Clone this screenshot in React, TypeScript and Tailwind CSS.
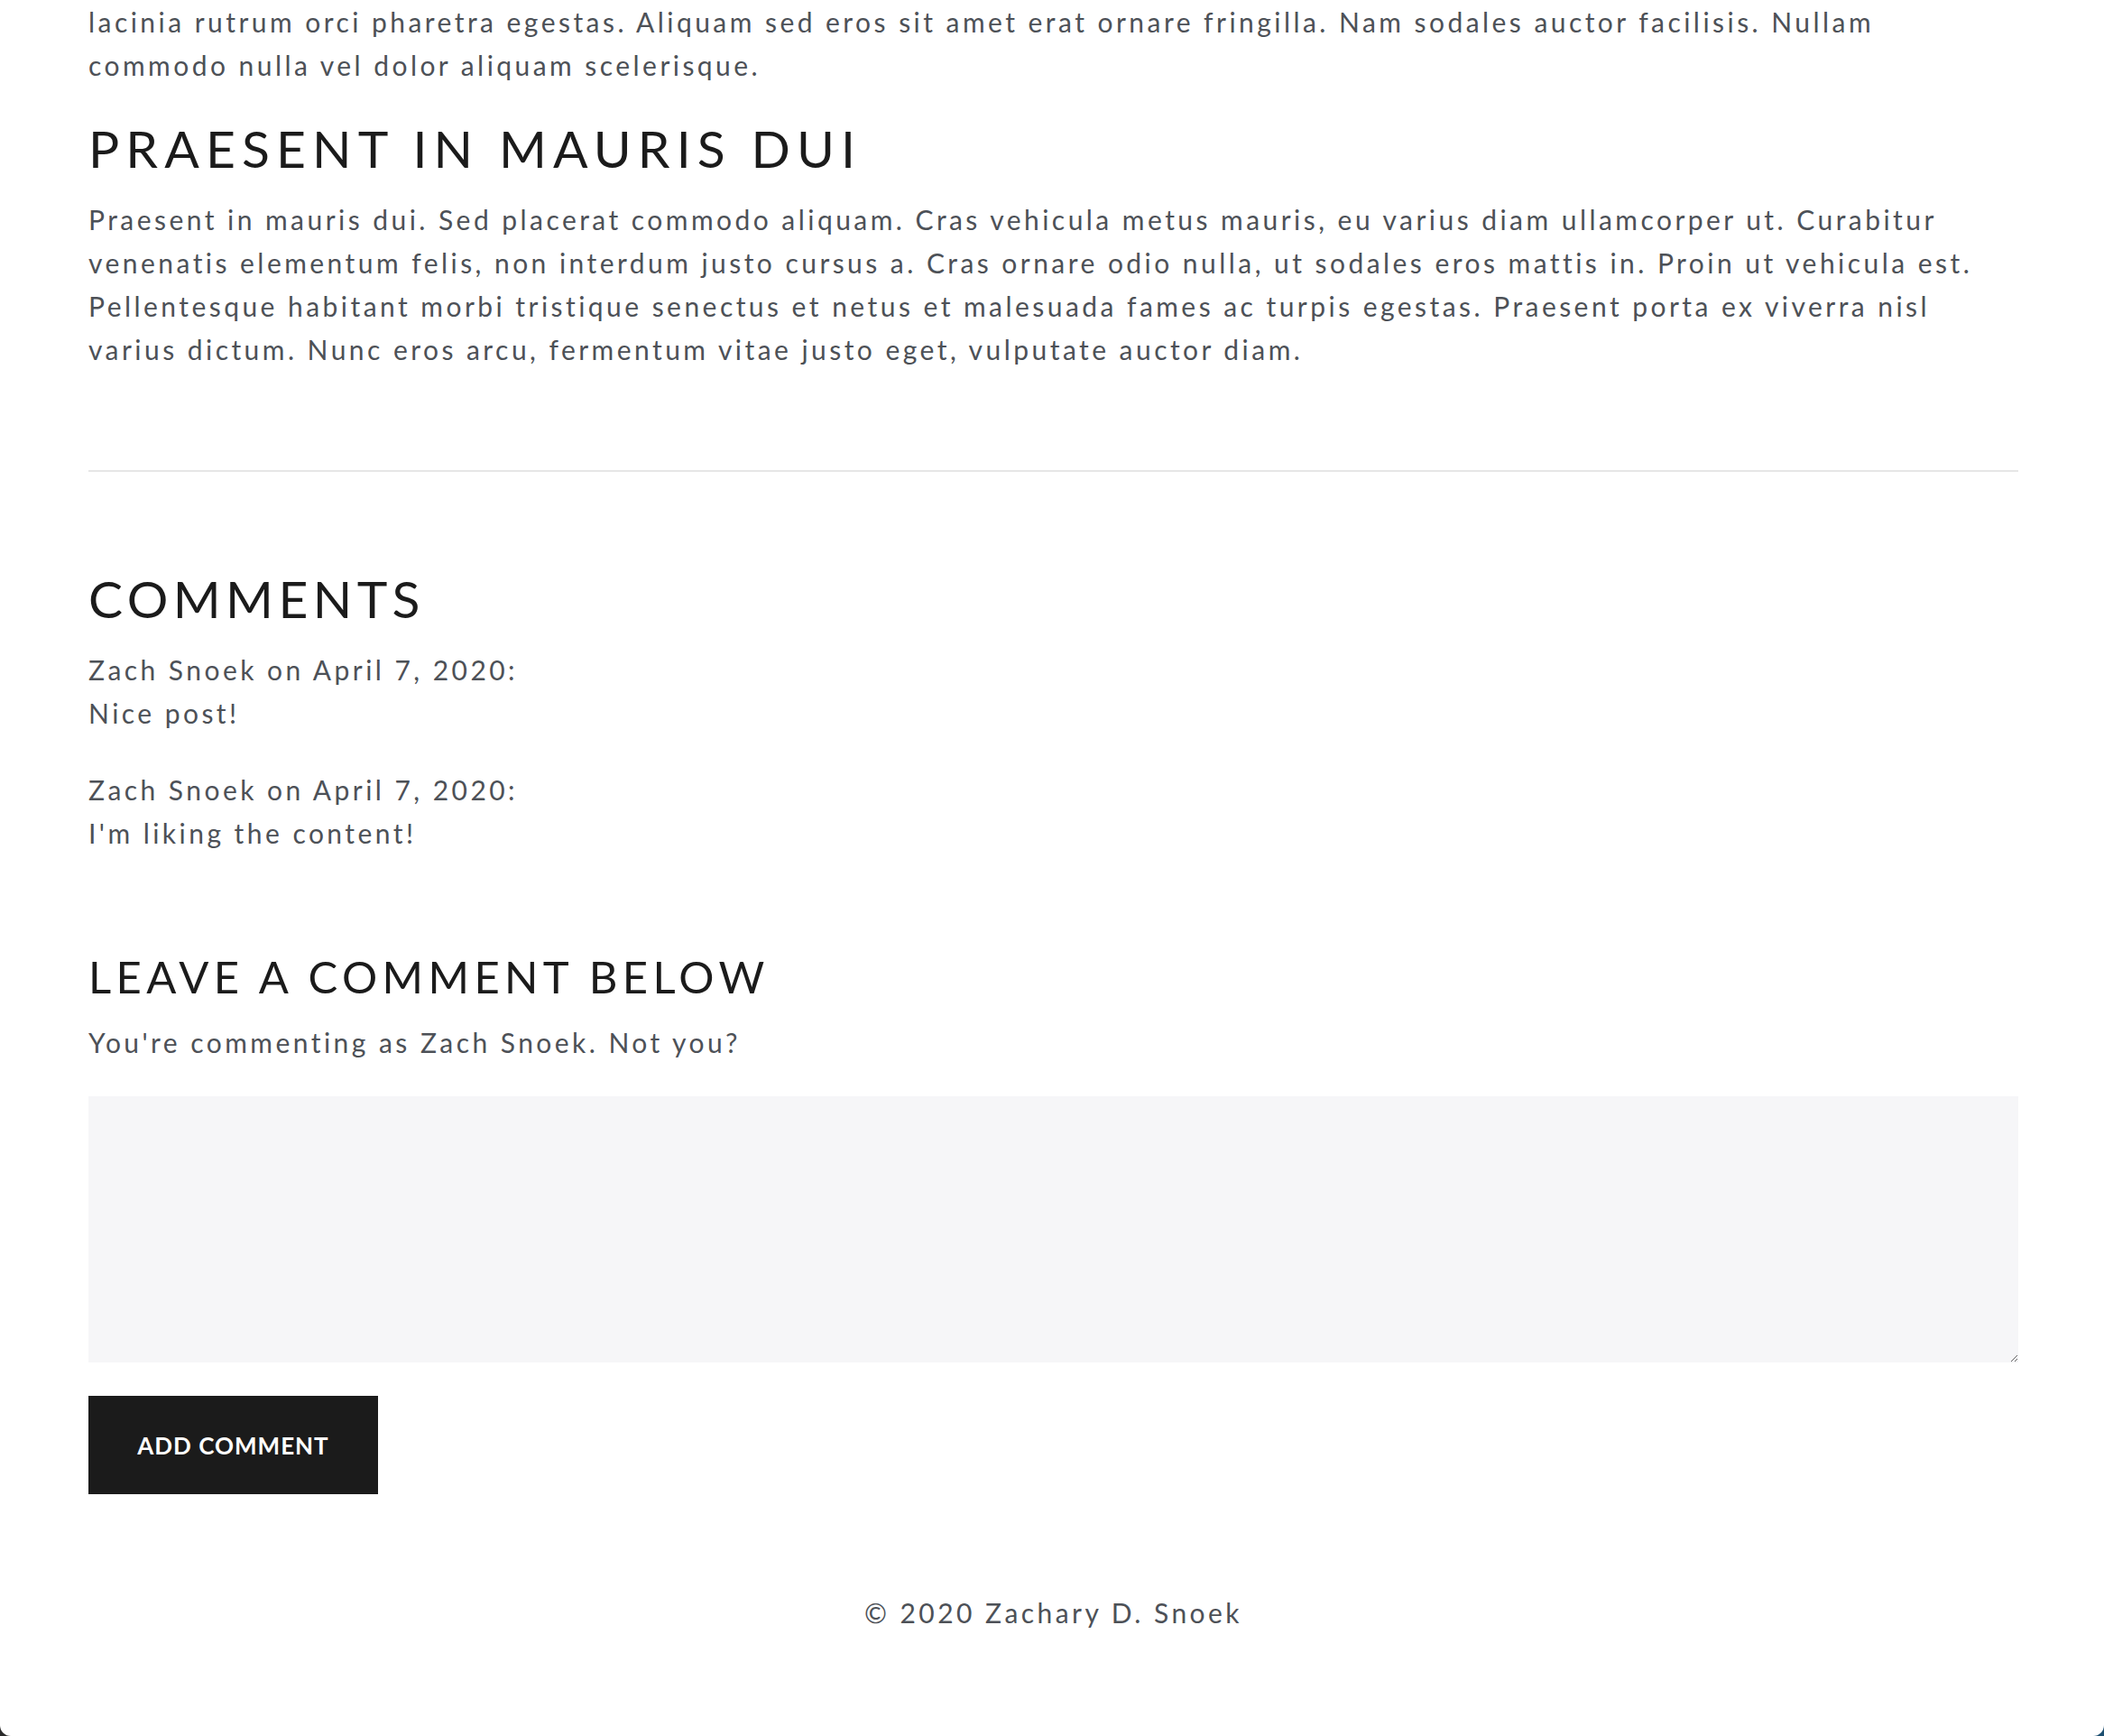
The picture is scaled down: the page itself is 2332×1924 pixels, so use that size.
import React from "react";

const comments = [
  { author: "Zach Snoek", date: "April 7, 2020", text: "Nice post!" },
  { author: "Zach Snoek", date: "April 7, 2020", text: "I'm liking the content!" },
];

export default function App() {
  return (
    <div className="h-[1924px] overflow-hidden bg-gradient-to-r from-[#2a2a2a] to-[#1c4e70]">
      <main
        className="flow-root h-full bg-white rounded-b-[12px] pl-[98px] pr-[95px] text-[30px] leading-[48px] tracking-[3.45px] text-[#4d5157]"
        style={{ fontFamily: "Lato, 'Noto Sans', sans-serif" }}
      >
        {/* Tail of the previous section */}
        <p className="whitespace-nowrap">
          lacinia rutrum orci pharetra egestas. Aliquam sed eros sit amet erat ornare fringilla. Nam sodales auctor facilisis. Nullam
          <br />
          commodo nulla vel dolor aliquam scelerisque.
        </p>

        <h2 className="mt-[34px] text-[57px] leading-[68px] tracking-[0.125em] text-[#1b1b1b]">PRAESENT IN MAURIS DUI</h2>
        <p className="mt-[21px] whitespace-nowrap">
          Praesent in mauris dui. Sed placerat commodo aliquam. Cras vehicula metus mauris, eu varius diam ullamcorper ut. Curabitur
          <br />
          venenatis elementum felis, non interdum justo cursus a. Cras ornare odio nulla, ut sodales eros mattis in. Proin ut vehicula est.
          <br />
          Pellentesque habitant morbi tristique senectus et netus et malesuada fames ac turpis egestas. Praesent porta ex viverra nisl
          <br />
          varius dictum. Nunc eros arcu, fermentum vitae justo eget, vulputate auctor diam.
        </p>

        <hr className="mt-[110px] border-0 h-[2px] bg-[#e6e6e6]" />

        {/* Comments */}
        <section className="mt-[106px]">
          <h2 className="text-[57px] leading-[68px] tracking-[0.095em] text-[#1b1b1b]">COMMENTS</h2>
          <div className="mt-[21px] flex flex-col gap-[37px]">
            {comments.map((c, i) => (
              <div key={i}>
                <p>
                  {c.author} on {c.date}:
                </p>
                <p>{c.text}</p>
              </div>
            ))}
          </div>
        </section>

        {/* Comment form */}
        <section className="mt-[106px]">
          <h3 className="text-[49px] leading-[59px] tracking-[0.11em] text-[#1b1b1b]">LEAVE A COMMENT BELOW</h3>
          <p className="mt-[19px]">You're commenting as Zach Snoek. Not you?</p>
          <textarea className="mt-[36px] block w-full h-[295px] bg-[#f6f6f8] outline-none border-0 p-4" />
          <button className="mt-[37px] h-[109px] w-[321px] bg-[#1b1b1b] text-white text-[26px] font-bold tracking-[1px]">
            ADD COMMENT
          </button>
        </section>

        <footer className="mt-[107px] text-center">© 2020 Zachary D. Snoek</footer>
      </main>
    </div>
  );
}
